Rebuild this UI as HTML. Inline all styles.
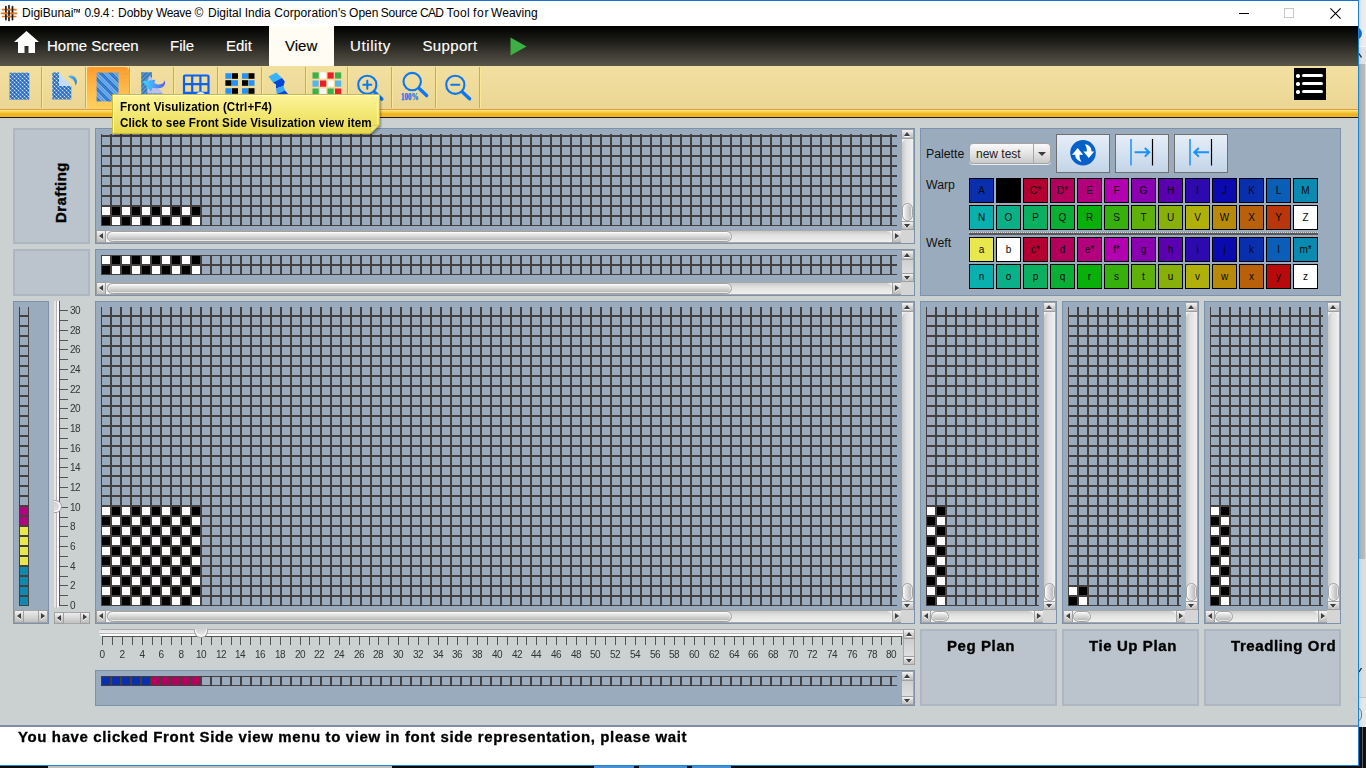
<!DOCTYPE html><html><head><meta charset="utf-8"><title>DigiBunai</title><style>
*{box-sizing:border-box;margin:0;padding:0}
html,body{width:1366px;height:768px;overflow:hidden;background:#cbd1d1;font-family:"Liberation Sans",sans-serif}
.a{position:absolute}
#root{position:absolute;left:0;top:0;width:1366px;height:768px;overflow:hidden;background:#cbd1d1}
.panel{position:absolute;background:#9aabbd;border:1px solid #7d91aa}
.lpanel{position:absolute;background:#bbc3cc;border:2px solid #adb6c1}
.grid{position:absolute;background-image:linear-gradient(to right,#454040 0,#454040 1px,transparent 1px,transparent 9px,#454040 9px,#454040 10px),linear-gradient(to bottom,#454040 0,#454040 1px,transparent 1px,transparent 9px,#454040 9px,#454040 10px);background-size:10px 10px;overflow:hidden}
.c{position:absolute;width:8px;height:8px}
.k{background:#000}.w{background:#fff}
.sbh{position:absolute;height:13px;background:#f3f3f3;border:1px solid #a8a8a8}
.trh{position:absolute;top:0;bottom:0;border-radius:6px;background:linear-gradient(to bottom,#c9c9c9,#e2e2e2 40%,#efefef)}
.sbv{position:absolute;width:13px;background:#f3f3f3;border:1px solid #a8a8a8}
.trv{position:absolute;left:0;right:0;border-radius:6px;background:linear-gradient(to right,#c9c9c9,#e2e2e2 40%,#efefef)}
.thh{position:absolute;top:0;height:11px;border-radius:6px;border:1px solid #a2a2a2;background:linear-gradient(to bottom,#fdfdfd,#e6e6e6 25%,#cfcfcf 60%,#b9b9b9 88%,#dedede);box-shadow:inset 0 0 0 1px rgba(255,255,255,0.55)}
.thv{position:absolute;left:0;width:11px;border-radius:6px;border:1px solid #a2a2a2;background:linear-gradient(to right,#fdfdfd,#e6e6e6 25%,#cfcfcf 60%,#b9b9b9 88%,#dedede);box-shadow:inset 0 0 0 1px rgba(255,255,255,0.55)}
.btn{position:absolute;background:linear-gradient(to bottom,#f4f4f4,#d4d4d4 50%,#bdbdbd);border:1px solid #a0a0a0}
.tri{position:absolute;width:0;height:0;border-style:solid}
.corner{position:absolute;background:#d5d5d5}
.tick{position:absolute;background:#555}
.tl{position:absolute;font-size:10px;color:#333;letter-spacing:-0.6px;white-space:nowrap}
.sw{position:absolute;width:25px;height:25px;border:1px solid #000;font-size:10px;line-height:23px;text-align:center;color:#0a0a0a}
.sw b{display:inline-block;font-weight:normal;transform:none}
.bl{position:absolute;font-weight:bold;color:#000;white-space:nowrap}
.mi{position:absolute;color:#fff;font-size:15px;top:36.300px;-webkit-text-stroke:0.150px currentColor;white-space:nowrap;line-height:20px}
</style></head><body><div id="root">
<div class="a" style="left:0;top:0;width:1359px;height:26px;background:#fff;border-top:1px solid #0f74d3"></div>
<svg class="a" style="left:0;top:4px" width="19" height="18" viewBox="0 4 19 18"><g stroke="#e07820" stroke-width="1.700" stroke-linecap="round"><path d="M2.600 9.700H16M1.600 13.300H16.600M2.600 16.500H15.800"/></g><g stroke="#1c1c1c" stroke-width="1.700" stroke-linecap="round"><path d="M5.900 6.600V19.600M9 5.600V20.400M12.500 6.600V19.600"/></g><g stroke="#e07820" stroke-width="1.700"><path d="M7.600 9.700H10.600M4.300 13.300H7.500M10.800 13.300H14M7.400 16.500H10.600"/></g></svg>
<div class="a" id="title" style="left:0;top:5px;width:600px;height:16px;font-size:12px;line-height:16px;color:#000;white-space:nowrap"><span class="a tw" style="left:22.1px;top:0;letter-spacing:0">DigiBunai</span> <span class="a tw" style="left:84.5px;top:0;letter-spacing:-0.45px">0.9.4</span> <span class="a tw" style="left:110.9px;top:0;letter-spacing:0">:</span> <span class="a tw" style="left:118.0px;top:0;letter-spacing:0">Dobby</span> <span class="a tw" style="left:156.1px;top:0;letter-spacing:-0.4px">Weave</span> <span class="a tw" style="left:194.5px;top:0;letter-spacing:0">©</span> <span class="a tw" style="left:208.0px;top:0;letter-spacing:0">Digital</span> <span class="a tw" style="left:244.7px;top:0;letter-spacing:0">India</span> <span class="a tw" style="left:274.2px;top:0;letter-spacing:0.09px">Corporation's</span> <span class="a tw" style="left:349.1px;top:0;letter-spacing:0">Open</span> <span class="a tw" style="left:380.8px;top:0;letter-spacing:-0.26px">Source</span> <span class="a tw" style="left:420.1px;top:0;letter-spacing:-0.7px">CAD</span> <span class="a tw" style="left:446.5px;top:0;letter-spacing:0.4px">Tool</span> <span class="a tw" style="left:472.9px;top:0;letter-spacing:0.8px">for</span> <span class="a tw" style="left:491.1px;top:0;letter-spacing:0">Weaving</span> <span class="a" style="left:73px;top:0;display:inline-block;transform:scaleX(0.68);transform-origin:0 0;font-weight:bold">™</span></div>
<div class="a" style="left:1239px;top:13px;width:10px;height:1px;background:#000"></div>
<div class="a" style="left:1284px;top:8px;width:10px;height:10px;border:1px solid #c8c8c8"></div>
<svg class="a" style="left:1329.500px;top:7.500px" width="11" height="11" viewBox="0 0 11 11"><path d="M0.400 0.400L10.600 10.600M10.600 0.400L0.400 10.600" stroke="#000" stroke-width="1.100" fill="none"/></svg>
<div class="a" style="left:0;top:26px;width:1359px;height:40px;background:linear-gradient(to bottom,#000 0,#1a1a16 35%,#3d3b32 70%,#59564a 100%)"></div>
<div class="a" style="left:269px;top:26px;width:65px;height:40px;background:#fefcf3"></div>
<svg class="a" style="left:14px;top:30.700px" width="25" height="23" viewBox="0 0 25 23"><path d="M12.5 0L25 11H21V22H14.5V15H10.5V22H4V11H0Z" fill="#fff"/></svg>
<div class="mi" style="left:47px;color:#fff;letter-spacing:0px">Home Screen</div>
<div class="mi" style="left:170px;color:#fff;letter-spacing:0px">File</div>
<div class="mi" style="left:226px;color:#fff;letter-spacing:0px">Edit</div>
<div class="mi" style="left:285px;color:#000;letter-spacing:0px">View</div>
<div class="mi" style="left:350px;color:#fff;letter-spacing:0.6px">Utility</div>
<div class="mi" style="left:422.5px;color:#fff;letter-spacing:0.35px">Support</div>
<svg class="a" style="left:510px;top:37px" width="17" height="19" viewBox="0 0 17 19"><path d="M0.5 0.5L16.5 9.5L0.5 18.5Z" fill="#3cb043"/></svg>
<div class="a" style="left:0;top:66px;width:1359px;height:43px;background:linear-gradient(to bottom,#f3e0a0,#ead594)"></div>
<div class="a" style="left:0;top:109px;width:1359px;height:1px;background:#e09a40"></div>
<div class="a" style="left:0;top:110px;width:1359px;height:7px;background:linear-gradient(to bottom,#fce98a 0,#f8cf50 25%,#f0b21c 60%,#f2b82a 100%)"></div>
<div class="a" style="left:0;top:117px;width:1359px;height:1px;background:#1a1a1a"></div>
<div class="a" style="left:86px;top:67px;width:43px;height:42px;border-radius:4px;background:linear-gradient(to bottom,#ff9b2e,#ffb648 45%,#ffd060)"></div>
<div class="a" style="left:41px;top:67px;width:1px;height:41px;background:#e0a04c"></div>
<div class="a" style="left:42px;top:67px;width:1px;height:41px;background:#f9e79a"></div>
<div class="a" style="left:85px;top:67px;width:1px;height:41px;background:#e0a04c"></div>
<div class="a" style="left:86px;top:67px;width:1px;height:41px;background:#f9e79a"></div>
<div class="a" style="left:129px;top:67px;width:1px;height:41px;background:#e0a04c"></div>
<div class="a" style="left:130px;top:67px;width:1px;height:41px;background:#f9e79a"></div>
<div class="a" style="left:173px;top:67px;width:1px;height:41px;background:#e0a04c"></div>
<div class="a" style="left:174px;top:67px;width:1px;height:41px;background:#f9e79a"></div>
<div class="a" style="left:217px;top:67px;width:1px;height:41px;background:#e0a04c"></div>
<div class="a" style="left:218px;top:67px;width:1px;height:41px;background:#f9e79a"></div>
<div class="a" style="left:261px;top:67px;width:1px;height:41px;background:#e0a04c"></div>
<div class="a" style="left:262px;top:67px;width:1px;height:41px;background:#f9e79a"></div>
<div class="a" style="left:305px;top:67px;width:1px;height:41px;background:#e0a04c"></div>
<div class="a" style="left:306px;top:67px;width:1px;height:41px;background:#f9e79a"></div>
<div class="a" style="left:347px;top:67px;width:1px;height:41px;background:#e0a04c"></div>
<div class="a" style="left:348px;top:67px;width:1px;height:41px;background:#f9e79a"></div>
<div class="a" style="left:391px;top:67px;width:1px;height:41px;background:#e0a04c"></div>
<div class="a" style="left:392px;top:67px;width:1px;height:41px;background:#f9e79a"></div>
<div class="a" style="left:435px;top:67px;width:1px;height:41px;background:#e0a04c"></div>
<div class="a" style="left:436px;top:67px;width:1px;height:41px;background:#f9e79a"></div>
<div class="a" style="left:479px;top:67px;width:1px;height:41px;background:#e0a04c"></div>
<div class="a" style="left:480px;top:67px;width:1px;height:41px;background:#f9e79a"></div>
<svg class="a" style="left:0;top:66px" width="500" height="44" viewBox="0 66 500 44"><defs>
<pattern id="dots" width="4" height="4" patternUnits="userSpaceOnUse"><rect width="4" height="4" fill="#3982d4"/><rect x="0" y="0" width="1" height="1" fill="#cfe0f5"/><rect x="2" y="2" width="1" height="1" fill="#c4d9f2"/><rect x="2" y="0" width="1" height="1" fill="#38598c"/><rect x="0" y="2" width="1" height="1" fill="#3b66a6"/><rect x="1" y="1" width="1" height="1" fill="#5a9ae0"/><rect x="3" y="3" width="1" height="1" fill="#5a9ae0"/></pattern>
<pattern id="diag" width="7" height="7" patternUnits="userSpaceOnUse" patternTransform="rotate(-45 0 0)"><rect width="7" height="7" fill="#1473c8"/><rect x="0" y="0" width="0.9" height="7" fill="#a6b0ec"/><rect x="0.9" y="0" width="2.2" height="7" fill="#56a6e8"/><rect x="3.1" y="0" width="0.9" height="7" fill="#a6b0ec"/><rect x="5.3" y="0" width="0.6" height="7" fill="#6a9be0"/></pattern>
<pattern id="hatch" width="3" height="3" patternUnits="userSpaceOnUse" patternTransform="rotate(45 0 0)"><rect width="3" height="3" fill="#2a7fb8"/><rect width="1" height="3" fill="#7f96d0"/></pattern>
<linearGradient id="arr" x1="0" y1="0" x2="1" y2="0"><stop offset="0" stop-color="#3fd8f8"/><stop offset="0.5" stop-color="#4aa0f8"/><stop offset="1" stop-color="#5a5af0"/></linearGradient>
<linearGradient id="arr2" x1="0" y1="0" x2="1" y2="1"><stop offset="0" stop-color="#5bc0f0"/><stop offset="1" stop-color="#2a6fd0"/></linearGradient>
</defs><rect x="9.500" y="72.700" width="19.800" height="27" fill="url(#dots)"/><path d="M52.3 72.6H59.2V86H71.3V99.4H52.3Z" fill="url(#dots)"/><path d="M59.2 73L71.3 86H59.2Z" fill="#c4ddf6"/><path d="M68 76.3C71.5 74.2 76.2 76.5 76.9 81.2C77 83 76.2 84.6 75.4 85.6C75.4 82 73.6 79.2 70.6 78.2C69.8 77.6 68.8 76.8 68 76.3Z" fill="url(#arr2)"/><rect x="96.6" y="72.6" width="21.9" height="28.8" fill="url(#diag)"/><path d="M141.200 72.200H152V80L163 94V96H141.200Z" fill="url(#hatch)"/><path d="M150 75.500L163 93.500H147.400V80Z" fill="#bfc1e4"/><path d="M142.500 81.200L155.400 79.800L154.200 83C158 85.600 163.400 84.800 164.800 80.200C166 84.400 163.600 87.400 160.200 88C157 88.500 154.500 87.600 152.400 88L151 91.800Z" fill="url(#arr)"/><g fill="none" stroke="#0a62f2" stroke-width="2.200"><rect x="184" y="75.5" width="24.5" height="26" rx="1"/><path d="M192.2 75.5V101M200.4 75.5V101M184 84.2H208.5M184 92.8H208.5"/></g><circle cx="200.600" cy="96.600" r="5" fill="#e4ecf2" stroke="#3a7be0" stroke-width="0.800"/><rect x="225.4" y="73.2" width="6.1" height="5.6" fill="#2391f5"/><rect x="231.9" y="73.2" width="6.1" height="5.6" fill="#000"/><rect x="242" y="73.2" width="6.1" height="5.6" fill="#2391f5"/><rect x="248.4" y="73.2" width="6.1" height="5.6" fill="#000"/><rect x="225.4" y="80.2" width="6.1" height="5.6" fill="#000"/><rect x="231.9" y="80.2" width="6.1" height="5.6" fill="#2391f5"/><rect x="242" y="80.2" width="6.1" height="5.6" fill="#000"/><rect x="248.4" y="80.2" width="6.1" height="5.6" fill="#2391f5"/><rect x="225.4" y="88.2" width="6.1" height="5.6" fill="#2391f5"/><rect x="231.9" y="88.2" width="6.1" height="5.6" fill="#000"/><rect x="242" y="88.2" width="6.1" height="5.6" fill="#2391f5"/><rect x="248.4" y="88.2" width="6.1" height="5.6" fill="#000"/><path d="M268.6 76.5L276.4 72.4L282 78L273 82.5Z" fill="#39b3fb"/><path d="M273 82.5L282 78L284.8 81.5L283.5 86L276 88.5L276 84.5Z" fill="#0347d8"/><path d="M276 88.5L283.5 86L285 90.5L276.8 94Z" fill="#39a9f5"/><path d="M276.8 94L285 90.5L289 95H276.8Z" fill="#0347d8"/><rect x="312.5" y="72.4" width="6.2" height="6.2" fill="#3cb04a"/><rect x="320" y="72.4" width="6.2" height="6.2" fill="#ffffff"/><rect x="327.5" y="72.4" width="6.2" height="6.2" fill="#ee1c25"/><rect x="335" y="72.4" width="6.2" height="6.2" fill="#3cb04a"/><rect x="312.5" y="80.5" width="6.2" height="6.2" fill="#55b6ea"/><rect x="320" y="80.5" width="6.2" height="6.2" fill="#ee1c25"/><rect x="327.5" y="80.5" width="6.2" height="6.2" fill="#ffffff"/><rect x="335" y="80.5" width="6.2" height="6.2" fill="#55b6ea"/><rect x="312.5" y="88.5" width="6.2" height="6.2" fill="#3cb04a"/><rect x="320" y="88.5" width="6.2" height="6.2" fill="#f4f4f4"/><rect x="327.5" y="88.5" width="6.2" height="6.2" fill="#3cb04a"/><rect x="335" y="88.5" width="6.2" height="6.2" fill="#ee1c25"/><g fill="none" stroke="#0a78f5" stroke-linecap="round"><circle cx="367.300" cy="84.800" r="9.100" stroke-width="2.100"/><path d="M363.300 84.800H371.300M367.300 80.800V88.800" stroke-width="2"/><path d="M374.600 92.200L381.800 99" stroke-width="3.600"/></g><g fill="none" stroke="#0a78f5" stroke-linecap="round"><circle cx="412.200" cy="81.600" r="8.700" stroke-width="2.100"/><path d="M419.200 88.600L426.600 95.600" stroke-width="3.400"/></g><text x="401" y="100.4" font-family="Liberation Serif,serif" font-weight="bold" font-size="10" fill="#0a6cf0" stroke="#0a6cf0" stroke-width="0.250" textLength="17.600" lengthAdjust="spacingAndGlyphs">100%</text><g fill="none" stroke="#0a78f5" stroke-linecap="round"><circle cx="455.300" cy="84.800" r="9.100" stroke-width="2.100"/><path d="M451.300 84.800H459.300" stroke-width="2.100"/><path d="M462.600 92.200L469.600 98.800" stroke-width="3.400"/></g></svg>
<div class="a" style="left:1294px;top:68px;width:32px;height:32px;background:#000"></div>
<div class="a" style="left:1302.200px;top:74.05px;width:20.800px;height:3.100px;border-radius:1.550px;background:#fff"></div>
<div class="a" style="left:1296.200px;top:74.05px;width:3.600px;height:3.500px;border-radius:1.750px;background:#fff"></div>
<div class="a" style="left:1302.200px;top:82.15px;width:20.800px;height:3.100px;border-radius:1.550px;background:#fff"></div>
<div class="a" style="left:1296.200px;top:82.15px;width:3.600px;height:3.500px;border-radius:1.750px;background:#fff"></div>
<div class="a" style="left:1302.200px;top:90.25px;width:20.800px;height:3.100px;border-radius:1.550px;background:#fff"></div>
<div class="a" style="left:1296.200px;top:90.25px;width:3.600px;height:3.500px;border-radius:1.750px;background:#fff"></div>
<div class="lpanel" style="left:13px;top:128px;width:77px;height:116px"></div>
<div class="lpanel" style="left:13px;top:249px;width:77px;height:47px"></div>
<div class="bl" style="left:53px;top:222.800px;font-size:14px;transform:rotate(-90deg) scaleX(1.07);transform-origin:0 0;letter-spacing:0.400px;line-height:16px;-webkit-text-stroke:0.350px #000">Drafting</div>
<div class="panel" style="left:95px;top:128px;width:820px;height:116px"></div>
<div class="grid" style="left:101px;top:134px;width:796px;height:92px;background-position:0px 2px"><i class="c w" style="left:1px;top:73px"></i><i class="c k" style="left:1px;top:83px"></i><i class="c k" style="left:11px;top:73px"></i><i class="c w" style="left:11px;top:83px"></i><i class="c w" style="left:21px;top:73px"></i><i class="c k" style="left:21px;top:83px"></i><i class="c k" style="left:31px;top:73px"></i><i class="c w" style="left:31px;top:83px"></i><i class="c w" style="left:41px;top:73px"></i><i class="c k" style="left:41px;top:83px"></i><i class="c k" style="left:51px;top:73px"></i><i class="c w" style="left:51px;top:83px"></i><i class="c w" style="left:61px;top:73px"></i><i class="c k" style="left:61px;top:83px"></i><i class="c k" style="left:71px;top:73px"></i><i class="c w" style="left:71px;top:83px"></i><i class="c w" style="left:81px;top:73px"></i><i class="c k" style="left:81px;top:83px"></i><i class="c k" style="left:91px;top:73px"></i><i class="c w" style="left:91px;top:83px"></i></div>
<div class="sbv" style="left:901px;top:129px;height:101px;width:13px"><div class="trv" style="top:9px;bottom:8px"></div><div class="thv" style="top:73px;height:18px;width:11px"></div></div><div class="btn" style="left:901px;top:129px;width:13px;height:10px"></div><div class="tri" style="left:904px;top:133px;border-width:0 3px 4px 3px;border-color:transparent transparent #fff transparent"></div><div class="tri" style="left:904px;top:132px;border-width:0 3px 4px 3px;border-color:transparent transparent #3e3e3e transparent"></div><div class="btn" style="left:901px;top:221px;width:13px;height:9px"></div><div class="tri" style="left:904px;top:225px;border-width:4px 3px 0 3px;border-color:#fff transparent transparent transparent"></div><div class="tri" style="left:904px;top:224px;border-width:4px 3px 0 3px;border-color:#3e3e3e transparent transparent transparent"></div>
<div class="sbh" style="left:96px;top:230px;width:805px;height:13px"><div class="trh" style="left:9px;right:8px"></div><div class="thh" style="left:10px;width:625px;height:11px"></div></div><div class="btn" style="left:96px;top:230px;width:10px;height:13px"></div><div class="tri"  style="left:99px;top:234px;border-width:3px 4px 3px 0;border-color:transparent #fff transparent transparent"></div><div class="tri" style="left:99px;top:233px;border-width:3px 4px 3px 0;border-color:transparent #3e3e3e transparent transparent"></div><div class="btn" style="left:892px;top:230px;width:9px;height:13px;border-right:none"></div><div class="tri"  style="left:895px;top:234px;border-width:3px 0 3px 4px;border-color:transparent transparent transparent #fff"></div><div class="tri" style="left:895px;top:233px;border-width:3px 0 3px 4px;border-color:transparent transparent transparent #3e3e3e"></div>
<div class="corner" style="left:901px;top:230px;width:13px;height:13px"></div>
<div class="panel" style="left:95px;top:249px;width:820px;height:47px"></div>
<div class="grid" style="left:101px;top:255px;width:796px;height:20px;background-position:0px 0px"><i class="c w" style="left:1px;top:1px"></i><i class="c k" style="left:1px;top:11px"></i><i class="c k" style="left:11px;top:1px"></i><i class="c w" style="left:11px;top:11px"></i><i class="c w" style="left:21px;top:1px"></i><i class="c k" style="left:21px;top:11px"></i><i class="c k" style="left:31px;top:1px"></i><i class="c w" style="left:31px;top:11px"></i><i class="c w" style="left:41px;top:1px"></i><i class="c k" style="left:41px;top:11px"></i><i class="c k" style="left:51px;top:1px"></i><i class="c w" style="left:51px;top:11px"></i><i class="c w" style="left:61px;top:1px"></i><i class="c k" style="left:61px;top:11px"></i><i class="c k" style="left:71px;top:1px"></i><i class="c w" style="left:71px;top:11px"></i><i class="c w" style="left:81px;top:1px"></i><i class="c k" style="left:81px;top:11px"></i><i class="c k" style="left:91px;top:1px"></i><i class="c w" style="left:91px;top:11px"></i></div>
<div class="sbv" style="left:901px;top:250px;height:32px;width:13px;background:linear-gradient(to bottom,#c4c4c4,#e8e8e8)"></div><div class="btn" style="left:901px;top:250px;width:13px;height:10px"></div><div class="tri" style="left:904px;top:254px;border-width:0 3px 4px 3px;border-color:transparent transparent #fff transparent"></div><div class="tri" style="left:904px;top:253px;border-width:0 3px 4px 3px;border-color:transparent transparent #3e3e3e transparent"></div><div class="btn" style="left:901px;top:273px;width:13px;height:9px"></div><div class="tri" style="left:904px;top:277px;border-width:4px 3px 0 3px;border-color:#fff transparent transparent transparent"></div><div class="tri" style="left:904px;top:276px;border-width:4px 3px 0 3px;border-color:#3e3e3e transparent transparent transparent"></div>
<div class="sbh" style="left:96px;top:282px;width:805px;height:13px"><div class="trh" style="left:9px;right:8px"></div><div class="thh" style="left:10px;width:625px;height:11px"></div></div><div class="btn" style="left:96px;top:282px;width:10px;height:13px"></div><div class="tri"  style="left:99px;top:286px;border-width:3px 4px 3px 0;border-color:transparent #fff transparent transparent"></div><div class="tri" style="left:99px;top:285px;border-width:3px 4px 3px 0;border-color:transparent #3e3e3e transparent transparent"></div><div class="btn" style="left:892px;top:282px;width:9px;height:13px;border-right:none"></div><div class="tri"  style="left:895px;top:286px;border-width:3px 0 3px 4px;border-color:transparent transparent transparent #fff"></div><div class="tri" style="left:895px;top:285px;border-width:3px 0 3px 4px;border-color:transparent transparent transparent #3e3e3e"></div>
<div class="corner" style="left:901px;top:282px;width:13px;height:13px"></div>
<div class="panel" style="left:95px;top:301px;width:820px;height:323px"></div>
<div class="grid" style="left:101px;top:307px;width:796px;height:299px;background-position:0px 9px"><i class="c k" style="left:1px;top:290px"></i><i class="c w" style="left:11px;top:290px"></i><i class="c k" style="left:21px;top:290px"></i><i class="c w" style="left:31px;top:290px"></i><i class="c k" style="left:41px;top:290px"></i><i class="c w" style="left:51px;top:290px"></i><i class="c k" style="left:61px;top:290px"></i><i class="c w" style="left:71px;top:290px"></i><i class="c k" style="left:81px;top:290px"></i><i class="c w" style="left:91px;top:290px"></i><i class="c w" style="left:1px;top:280px"></i><i class="c k" style="left:11px;top:280px"></i><i class="c w" style="left:21px;top:280px"></i><i class="c k" style="left:31px;top:280px"></i><i class="c w" style="left:41px;top:280px"></i><i class="c k" style="left:51px;top:280px"></i><i class="c w" style="left:61px;top:280px"></i><i class="c k" style="left:71px;top:280px"></i><i class="c w" style="left:81px;top:280px"></i><i class="c k" style="left:91px;top:280px"></i><i class="c k" style="left:1px;top:270px"></i><i class="c w" style="left:11px;top:270px"></i><i class="c k" style="left:21px;top:270px"></i><i class="c w" style="left:31px;top:270px"></i><i class="c k" style="left:41px;top:270px"></i><i class="c w" style="left:51px;top:270px"></i><i class="c k" style="left:61px;top:270px"></i><i class="c w" style="left:71px;top:270px"></i><i class="c k" style="left:81px;top:270px"></i><i class="c w" style="left:91px;top:270px"></i><i class="c w" style="left:1px;top:260px"></i><i class="c k" style="left:11px;top:260px"></i><i class="c w" style="left:21px;top:260px"></i><i class="c k" style="left:31px;top:260px"></i><i class="c w" style="left:41px;top:260px"></i><i class="c k" style="left:51px;top:260px"></i><i class="c w" style="left:61px;top:260px"></i><i class="c k" style="left:71px;top:260px"></i><i class="c w" style="left:81px;top:260px"></i><i class="c k" style="left:91px;top:260px"></i><i class="c k" style="left:1px;top:250px"></i><i class="c w" style="left:11px;top:250px"></i><i class="c k" style="left:21px;top:250px"></i><i class="c w" style="left:31px;top:250px"></i><i class="c k" style="left:41px;top:250px"></i><i class="c w" style="left:51px;top:250px"></i><i class="c k" style="left:61px;top:250px"></i><i class="c w" style="left:71px;top:250px"></i><i class="c k" style="left:81px;top:250px"></i><i class="c w" style="left:91px;top:250px"></i><i class="c w" style="left:1px;top:240px"></i><i class="c k" style="left:11px;top:240px"></i><i class="c w" style="left:21px;top:240px"></i><i class="c k" style="left:31px;top:240px"></i><i class="c w" style="left:41px;top:240px"></i><i class="c k" style="left:51px;top:240px"></i><i class="c w" style="left:61px;top:240px"></i><i class="c k" style="left:71px;top:240px"></i><i class="c w" style="left:81px;top:240px"></i><i class="c k" style="left:91px;top:240px"></i><i class="c k" style="left:1px;top:230px"></i><i class="c w" style="left:11px;top:230px"></i><i class="c k" style="left:21px;top:230px"></i><i class="c w" style="left:31px;top:230px"></i><i class="c k" style="left:41px;top:230px"></i><i class="c w" style="left:51px;top:230px"></i><i class="c k" style="left:61px;top:230px"></i><i class="c w" style="left:71px;top:230px"></i><i class="c k" style="left:81px;top:230px"></i><i class="c w" style="left:91px;top:230px"></i><i class="c w" style="left:1px;top:220px"></i><i class="c k" style="left:11px;top:220px"></i><i class="c w" style="left:21px;top:220px"></i><i class="c k" style="left:31px;top:220px"></i><i class="c w" style="left:41px;top:220px"></i><i class="c k" style="left:51px;top:220px"></i><i class="c w" style="left:61px;top:220px"></i><i class="c k" style="left:71px;top:220px"></i><i class="c w" style="left:81px;top:220px"></i><i class="c k" style="left:91px;top:220px"></i><i class="c k" style="left:1px;top:210px"></i><i class="c w" style="left:11px;top:210px"></i><i class="c k" style="left:21px;top:210px"></i><i class="c w" style="left:31px;top:210px"></i><i class="c k" style="left:41px;top:210px"></i><i class="c w" style="left:51px;top:210px"></i><i class="c k" style="left:61px;top:210px"></i><i class="c w" style="left:71px;top:210px"></i><i class="c k" style="left:81px;top:210px"></i><i class="c w" style="left:91px;top:210px"></i><i class="c w" style="left:1px;top:200px"></i><i class="c k" style="left:11px;top:200px"></i><i class="c w" style="left:21px;top:200px"></i><i class="c k" style="left:31px;top:200px"></i><i class="c w" style="left:41px;top:200px"></i><i class="c k" style="left:51px;top:200px"></i><i class="c w" style="left:61px;top:200px"></i><i class="c k" style="left:71px;top:200px"></i><i class="c w" style="left:81px;top:200px"></i><i class="c k" style="left:91px;top:200px"></i></div>
<div class="sbv" style="left:901px;top:302px;height:308px;width:13px"><div class="trv" style="top:9px;bottom:8px"></div><div class="thv" style="top:280px;height:18px;width:11px"></div></div><div class="btn" style="left:901px;top:302px;width:13px;height:10px"></div><div class="tri" style="left:904px;top:306px;border-width:0 3px 4px 3px;border-color:transparent transparent #fff transparent"></div><div class="tri" style="left:904px;top:305px;border-width:0 3px 4px 3px;border-color:transparent transparent #3e3e3e transparent"></div><div class="btn" style="left:901px;top:601px;width:13px;height:9px"></div><div class="tri" style="left:904px;top:605px;border-width:4px 3px 0 3px;border-color:#fff transparent transparent transparent"></div><div class="tri" style="left:904px;top:604px;border-width:4px 3px 0 3px;border-color:#3e3e3e transparent transparent transparent"></div>
<div class="sbh" style="left:96px;top:610px;width:805px;height:13px"><div class="trh" style="left:9px;right:8px"></div><div class="thh" style="left:10px;width:625px;height:11px"></div></div><div class="btn" style="left:96px;top:610px;width:10px;height:13px"></div><div class="tri"  style="left:99px;top:614px;border-width:3px 4px 3px 0;border-color:transparent #fff transparent transparent"></div><div class="tri" style="left:99px;top:613px;border-width:3px 4px 3px 0;border-color:transparent #3e3e3e transparent transparent"></div><div class="btn" style="left:892px;top:610px;width:9px;height:13px;border-right:none"></div><div class="tri"  style="left:895px;top:614px;border-width:3px 0 3px 4px;border-color:transparent transparent transparent #fff"></div><div class="tri" style="left:895px;top:613px;border-width:3px 0 3px 4px;border-color:transparent transparent transparent #3e3e3e"></div>
<div class="corner" style="left:901px;top:610px;width:13px;height:13px"></div>
<div class="panel" style="left:13px;top:301px;width:36px;height:323px"></div>
<div class="a" style="left:19px;top:307px;width:10px;height:299px;overflow:hidden;background-image:linear-gradient(to right,#454040 0,#454040 1px,transparent 1px,transparent 9px,#454040 9px,#454040 10px),linear-gradient(to bottom,#454040 0,#454040 1px,transparent 1px,transparent 9px,#454040 9px,#454040 10px);background-size:10px 10px;background-position:0 9px"><i class="c" style="left:1px;top:290px;background:#1089b0"></i><i class="c" style="left:1px;top:280px;background:#1089b0"></i><i class="c" style="left:1px;top:270px;background:#1089b0"></i><i class="c" style="left:1px;top:260px;background:#1089b0"></i><i class="c" style="left:1px;top:250px;background:#e9e74e"></i><i class="c" style="left:1px;top:240px;background:#e9e74e"></i><i class="c" style="left:1px;top:230px;background:#e9e74e"></i><i class="c" style="left:1px;top:220px;background:#e9e74e"></i><i class="c" style="left:1px;top:210px;background:#b3007c"></i><i class="c" style="left:1px;top:200px;background:#b3007c"></i></div>
<div class="sbh" style="left:14px;top:610px;width:34px;height:13px;background:linear-gradient(to bottom,#ebebeb,#c2c2c2)"></div><div class="btn" style="left:14px;top:610px;width:10px;height:13px"></div><div class="tri"  style="left:17px;top:614px;border-width:3px 4px 3px 0;border-color:transparent #fff transparent transparent"></div><div class="tri" style="left:17px;top:613px;border-width:3px 4px 3px 0;border-color:transparent #3e3e3e transparent transparent"></div><div class="btn" style="left:38px;top:610px;width:10px;height:13px"></div><div class="tri"  style="left:41px;top:614px;border-width:3px 0 3px 4px;border-color:transparent transparent transparent #fff"></div><div class="tri" style="left:41px;top:613px;border-width:3px 0 3px 4px;border-color:transparent transparent transparent #3e3e3e"></div>
<div class="a" style="left:0;top:0;width:0;height:0;will-change:transform">
<div class="a" style="left:54px;top:301px;width:5px;height:307px;border-radius:0 0 3px 3px;background:linear-gradient(to right,#e6e6e6 0,#e6e6e6 2px,#b4b4b4 2px,#b4b4b4 3px,#fff 3px)"></div>
<div class="a" style="left:53.700px;top:499.500px;width:8px;height:13.300px;border-radius:0 7px 7px 0;background:linear-gradient(to bottom,#cecece,#e2e2e2);border:1px solid #a4a4a4;border-left:none;box-shadow:inset -1px 0 0 1px rgba(255,255,255,0.8);z-index:3"></div>
<div class="tick" style="left:59px;top:301px;width:1px;height:305px"></div>
<div class="tick" style="left:60px;top:605px;width:8px;height:1px"></div>
<div class="tl" style="left:70px;top:599px;line-height:13px">0</div>
<div class="tick" style="left:60px;top:595px;width:8px;height:1px"></div>
<div class="tick" style="left:60px;top:585px;width:8px;height:1px"></div>
<div class="tl" style="left:70px;top:579px;line-height:13px">2</div>
<div class="tick" style="left:60px;top:576px;width:8px;height:1px"></div>
<div class="tick" style="left:60px;top:566px;width:8px;height:1px"></div>
<div class="tl" style="left:70px;top:560px;line-height:13px">4</div>
<div class="tick" style="left:60px;top:556px;width:8px;height:1px"></div>
<div class="tick" style="left:60px;top:546px;width:8px;height:1px"></div>
<div class="tl" style="left:70px;top:540px;line-height:13px">6</div>
<div class="tick" style="left:60px;top:536px;width:8px;height:1px"></div>
<div class="tick" style="left:60px;top:526px;width:8px;height:1px"></div>
<div class="tl" style="left:70px;top:520px;line-height:13px">8</div>
<div class="tick" style="left:60px;top:517px;width:8px;height:1px"></div>
<div class="tick" style="left:60px;top:507px;width:8px;height:1px"></div>
<div class="tl" style="left:70px;top:501px;line-height:13px">10</div>
<div class="tick" style="left:60px;top:497px;width:8px;height:1px"></div>
<div class="tick" style="left:60px;top:487px;width:8px;height:1px"></div>
<div class="tl" style="left:70px;top:481px;line-height:13px">12</div>
<div class="tick" style="left:60px;top:477px;width:8px;height:1px"></div>
<div class="tick" style="left:60px;top:467px;width:8px;height:1px"></div>
<div class="tl" style="left:70px;top:461px;line-height:13px">14</div>
<div class="tick" style="left:60px;top:458px;width:8px;height:1px"></div>
<div class="tick" style="left:60px;top:448px;width:8px;height:1px"></div>
<div class="tl" style="left:70px;top:442px;line-height:13px">16</div>
<div class="tick" style="left:60px;top:438px;width:8px;height:1px"></div>
<div class="tick" style="left:60px;top:428px;width:8px;height:1px"></div>
<div class="tl" style="left:70px;top:422px;line-height:13px">18</div>
<div class="tick" style="left:60px;top:418px;width:8px;height:1px"></div>
<div class="tick" style="left:60px;top:408px;width:8px;height:1px"></div>
<div class="tl" style="left:70px;top:402px;line-height:13px">20</div>
<div class="tick" style="left:60px;top:399px;width:8px;height:1px"></div>
<div class="tick" style="left:60px;top:389px;width:8px;height:1px"></div>
<div class="tl" style="left:70px;top:383px;line-height:13px">22</div>
<div class="tick" style="left:60px;top:379px;width:8px;height:1px"></div>
<div class="tick" style="left:60px;top:369px;width:8px;height:1px"></div>
<div class="tl" style="left:70px;top:363px;line-height:13px">24</div>
<div class="tick" style="left:60px;top:359px;width:8px;height:1px"></div>
<div class="tick" style="left:60px;top:349px;width:8px;height:1px"></div>
<div class="tl" style="left:70px;top:343px;line-height:13px">26</div>
<div class="tick" style="left:60px;top:340px;width:8px;height:1px"></div>
<div class="tick" style="left:60px;top:330px;width:8px;height:1px"></div>
<div class="tl" style="left:70px;top:324px;line-height:13px">28</div>
<div class="tick" style="left:60px;top:320px;width:8px;height:1px"></div>
<div class="tick" style="left:60px;top:310px;width:8px;height:1px"></div>
<div class="tl" style="left:70px;top:304px;line-height:13px">30</div>
<div class="sbh" style="left:54px;top:612px;width:36px;height:12px;background:linear-gradient(to bottom,#ebebeb,#c2c2c2)"></div><div class="btn" style="left:54px;top:612px;width:10px;height:12px"></div><div class="tri"  style="left:57px;top:616px;border-width:3px 4px 3px 0;border-color:transparent #fff transparent transparent"></div><div class="tri" style="left:57px;top:615px;border-width:3px 4px 3px 0;border-color:transparent #3e3e3e transparent transparent"></div><div class="btn" style="left:80px;top:612px;width:10px;height:12px"></div><div class="tri"  style="left:83px;top:615px;border-width:3px 0 3px 4px;border-color:transparent transparent transparent #fff"></div><div class="tri" style="left:83px;top:614px;border-width:3px 0 3px 4px;border-color:transparent transparent transparent #3e3e3e"></div>
<div class="a" style="left:99px;top:629px;width:804px;height:7px;border-radius:4px 0 0 4px;background:linear-gradient(to bottom,#a8a8a8 0,#a8a8a8 1px,#e2e2e2 1px,#efefef 4px,#b8b8b8 4px,#b8b8b8 5px,#fff 5px)"></div>
<div class="a" style="left:194.300px;top:629.300px;width:13.400px;height:8.700px;border-radius:0 0 7px 7px;background:linear-gradient(to bottom,#d2d2d2,#eeeeee);border:1px solid #a4a4a4;border-top:none;box-shadow:inset 0 -1px 0 1px rgba(255,255,255,0.8);z-index:3"></div>
<div class="tick" style="left:102px;top:636px;width:800px;height:1px"></div>
<div class="tick" style="left:102px;top:636px;width:1px;height:9px"></div>
<div class="tl" style="left:92px;top:648px;width:20px;text-align:center;line-height:13px">0</div>
<div class="tick" style="left:112px;top:636px;width:1px;height:9px"></div>
<div class="tick" style="left:122px;top:636px;width:1px;height:9px"></div>
<div class="tl" style="left:112px;top:648px;width:20px;text-align:center;line-height:13px">2</div>
<div class="tick" style="left:132px;top:636px;width:1px;height:9px"></div>
<div class="tick" style="left:142px;top:636px;width:1px;height:9px"></div>
<div class="tl" style="left:132px;top:648px;width:20px;text-align:center;line-height:13px">4</div>
<div class="tick" style="left:152px;top:636px;width:1px;height:9px"></div>
<div class="tick" style="left:161px;top:636px;width:1px;height:9px"></div>
<div class="tl" style="left:151px;top:648px;width:20px;text-align:center;line-height:13px">6</div>
<div class="tick" style="left:171px;top:636px;width:1px;height:9px"></div>
<div class="tick" style="left:181px;top:636px;width:1px;height:9px"></div>
<div class="tl" style="left:171px;top:648px;width:20px;text-align:center;line-height:13px">8</div>
<div class="tick" style="left:191px;top:636px;width:1px;height:9px"></div>
<div class="tick" style="left:201px;top:636px;width:1px;height:9px"></div>
<div class="tl" style="left:191px;top:648px;width:20px;text-align:center;line-height:13px">10</div>
<div class="tick" style="left:211px;top:636px;width:1px;height:9px"></div>
<div class="tick" style="left:221px;top:636px;width:1px;height:9px"></div>
<div class="tl" style="left:211px;top:648px;width:20px;text-align:center;line-height:13px">12</div>
<div class="tick" style="left:231px;top:636px;width:1px;height:9px"></div>
<div class="tick" style="left:240px;top:636px;width:1px;height:9px"></div>
<div class="tl" style="left:230px;top:648px;width:20px;text-align:center;line-height:13px">14</div>
<div class="tick" style="left:250px;top:636px;width:1px;height:9px"></div>
<div class="tick" style="left:260px;top:636px;width:1px;height:9px"></div>
<div class="tl" style="left:250px;top:648px;width:20px;text-align:center;line-height:13px">16</div>
<div class="tick" style="left:270px;top:636px;width:1px;height:9px"></div>
<div class="tick" style="left:280px;top:636px;width:1px;height:9px"></div>
<div class="tl" style="left:270px;top:648px;width:20px;text-align:center;line-height:13px">18</div>
<div class="tick" style="left:290px;top:636px;width:1px;height:9px"></div>
<div class="tick" style="left:300px;top:636px;width:1px;height:9px"></div>
<div class="tl" style="left:290px;top:648px;width:20px;text-align:center;line-height:13px">20</div>
<div class="tick" style="left:309px;top:636px;width:1px;height:9px"></div>
<div class="tick" style="left:319px;top:636px;width:1px;height:9px"></div>
<div class="tl" style="left:309px;top:648px;width:20px;text-align:center;line-height:13px">22</div>
<div class="tick" style="left:329px;top:636px;width:1px;height:9px"></div>
<div class="tick" style="left:339px;top:636px;width:1px;height:9px"></div>
<div class="tl" style="left:329px;top:648px;width:20px;text-align:center;line-height:13px">24</div>
<div class="tick" style="left:349px;top:636px;width:1px;height:9px"></div>
<div class="tick" style="left:359px;top:636px;width:1px;height:9px"></div>
<div class="tl" style="left:349px;top:648px;width:20px;text-align:center;line-height:13px">26</div>
<div class="tick" style="left:369px;top:636px;width:1px;height:9px"></div>
<div class="tick" style="left:378px;top:636px;width:1px;height:9px"></div>
<div class="tl" style="left:368px;top:648px;width:20px;text-align:center;line-height:13px">28</div>
<div class="tick" style="left:388px;top:636px;width:1px;height:9px"></div>
<div class="tick" style="left:398px;top:636px;width:1px;height:9px"></div>
<div class="tl" style="left:388px;top:648px;width:20px;text-align:center;line-height:13px">30</div>
<div class="tick" style="left:408px;top:636px;width:1px;height:9px"></div>
<div class="tick" style="left:418px;top:636px;width:1px;height:9px"></div>
<div class="tl" style="left:408px;top:648px;width:20px;text-align:center;line-height:13px">32</div>
<div class="tick" style="left:428px;top:636px;width:1px;height:9px"></div>
<div class="tick" style="left:438px;top:636px;width:1px;height:9px"></div>
<div class="tl" style="left:428px;top:648px;width:20px;text-align:center;line-height:13px">34</div>
<div class="tick" style="left:447px;top:636px;width:1px;height:9px"></div>
<div class="tick" style="left:457px;top:636px;width:1px;height:9px"></div>
<div class="tl" style="left:447px;top:648px;width:20px;text-align:center;line-height:13px">36</div>
<div class="tick" style="left:467px;top:636px;width:1px;height:9px"></div>
<div class="tick" style="left:477px;top:636px;width:1px;height:9px"></div>
<div class="tl" style="left:467px;top:648px;width:20px;text-align:center;line-height:13px">38</div>
<div class="tick" style="left:487px;top:636px;width:1px;height:9px"></div>
<div class="tick" style="left:497px;top:636px;width:1px;height:9px"></div>
<div class="tl" style="left:487px;top:648px;width:20px;text-align:center;line-height:13px">40</div>
<div class="tick" style="left:507px;top:636px;width:1px;height:9px"></div>
<div class="tick" style="left:517px;top:636px;width:1px;height:9px"></div>
<div class="tl" style="left:507px;top:648px;width:20px;text-align:center;line-height:13px">42</div>
<div class="tick" style="left:526px;top:636px;width:1px;height:9px"></div>
<div class="tick" style="left:536px;top:636px;width:1px;height:9px"></div>
<div class="tl" style="left:526px;top:648px;width:20px;text-align:center;line-height:13px">44</div>
<div class="tick" style="left:546px;top:636px;width:1px;height:9px"></div>
<div class="tick" style="left:556px;top:636px;width:1px;height:9px"></div>
<div class="tl" style="left:546px;top:648px;width:20px;text-align:center;line-height:13px">46</div>
<div class="tick" style="left:566px;top:636px;width:1px;height:9px"></div>
<div class="tick" style="left:576px;top:636px;width:1px;height:9px"></div>
<div class="tl" style="left:566px;top:648px;width:20px;text-align:center;line-height:13px">48</div>
<div class="tick" style="left:586px;top:636px;width:1px;height:9px"></div>
<div class="tick" style="left:595px;top:636px;width:1px;height:9px"></div>
<div class="tl" style="left:585px;top:648px;width:20px;text-align:center;line-height:13px">50</div>
<div class="tick" style="left:605px;top:636px;width:1px;height:9px"></div>
<div class="tick" style="left:615px;top:636px;width:1px;height:9px"></div>
<div class="tl" style="left:605px;top:648px;width:20px;text-align:center;line-height:13px">52</div>
<div class="tick" style="left:625px;top:636px;width:1px;height:9px"></div>
<div class="tick" style="left:635px;top:636px;width:1px;height:9px"></div>
<div class="tl" style="left:625px;top:648px;width:20px;text-align:center;line-height:13px">54</div>
<div class="tick" style="left:645px;top:636px;width:1px;height:9px"></div>
<div class="tick" style="left:655px;top:636px;width:1px;height:9px"></div>
<div class="tl" style="left:645px;top:648px;width:20px;text-align:center;line-height:13px">56</div>
<div class="tick" style="left:664px;top:636px;width:1px;height:9px"></div>
<div class="tick" style="left:674px;top:636px;width:1px;height:9px"></div>
<div class="tl" style="left:664px;top:648px;width:20px;text-align:center;line-height:13px">58</div>
<div class="tick" style="left:684px;top:636px;width:1px;height:9px"></div>
<div class="tick" style="left:694px;top:636px;width:1px;height:9px"></div>
<div class="tl" style="left:684px;top:648px;width:20px;text-align:center;line-height:13px">60</div>
<div class="tick" style="left:704px;top:636px;width:1px;height:9px"></div>
<div class="tick" style="left:714px;top:636px;width:1px;height:9px"></div>
<div class="tl" style="left:704px;top:648px;width:20px;text-align:center;line-height:13px">62</div>
<div class="tick" style="left:724px;top:636px;width:1px;height:9px"></div>
<div class="tick" style="left:734px;top:636px;width:1px;height:9px"></div>
<div class="tl" style="left:724px;top:648px;width:20px;text-align:center;line-height:13px">64</div>
<div class="tick" style="left:743px;top:636px;width:1px;height:9px"></div>
<div class="tick" style="left:753px;top:636px;width:1px;height:9px"></div>
<div class="tl" style="left:743px;top:648px;width:20px;text-align:center;line-height:13px">66</div>
<div class="tick" style="left:763px;top:636px;width:1px;height:9px"></div>
<div class="tick" style="left:773px;top:636px;width:1px;height:9px"></div>
<div class="tl" style="left:763px;top:648px;width:20px;text-align:center;line-height:13px">68</div>
<div class="tick" style="left:783px;top:636px;width:1px;height:9px"></div>
<div class="tick" style="left:793px;top:636px;width:1px;height:9px"></div>
<div class="tl" style="left:783px;top:648px;width:20px;text-align:center;line-height:13px">70</div>
<div class="tick" style="left:803px;top:636px;width:1px;height:9px"></div>
<div class="tick" style="left:812px;top:636px;width:1px;height:9px"></div>
<div class="tl" style="left:802px;top:648px;width:20px;text-align:center;line-height:13px">72</div>
<div class="tick" style="left:822px;top:636px;width:1px;height:9px"></div>
<div class="tick" style="left:832px;top:636px;width:1px;height:9px"></div>
<div class="tl" style="left:822px;top:648px;width:20px;text-align:center;line-height:13px">74</div>
<div class="tick" style="left:842px;top:636px;width:1px;height:9px"></div>
<div class="tick" style="left:852px;top:636px;width:1px;height:9px"></div>
<div class="tl" style="left:842px;top:648px;width:20px;text-align:center;line-height:13px">76</div>
<div class="tick" style="left:862px;top:636px;width:1px;height:9px"></div>
<div class="tick" style="left:872px;top:636px;width:1px;height:9px"></div>
<div class="tl" style="left:862px;top:648px;width:20px;text-align:center;line-height:13px">78</div>
<div class="tick" style="left:881px;top:636px;width:1px;height:9px"></div>
<div class="tick" style="left:891px;top:636px;width:1px;height:9px"></div>
<div class="tl" style="left:881px;top:648px;width:20px;text-align:center;line-height:13px">80</div>
<div class="tick" style="left:901px;top:636px;width:1px;height:9px"></div>
<div class="sbv" style="left:903px;top:629px;height:36px;width:12px;background:linear-gradient(to bottom,#c4c4c4,#e8e8e8)"></div><div class="btn" style="left:903px;top:629px;width:12px;height:10px"></div><div class="tri" style="left:906px;top:633px;border-width:0 3px 4px 3px;border-color:transparent transparent #fff transparent"></div><div class="tri" style="left:906px;top:632px;border-width:0 3px 4px 3px;border-color:transparent transparent #3e3e3e transparent"></div><div class="btn" style="left:903px;top:656px;width:12px;height:9px"></div><div class="tri" style="left:906px;top:660px;border-width:4px 3px 0 3px;border-color:#fff transparent transparent transparent"></div><div class="tri" style="left:906px;top:659px;border-width:4px 3px 0 3px;border-color:#3e3e3e transparent transparent transparent"></div>
</div>
<div class="panel" style="left:95px;top:670px;width:820px;height:36px"></div>
<div class="a" style="left:101px;top:676px;width:796px;height:10px;overflow:hidden;background-image:linear-gradient(to right,#454040 0,#454040 1px,transparent 1px,transparent 9px,#454040 9px,#454040 10px),linear-gradient(to bottom,#454040 0,#454040 1px,transparent 1px,transparent 9px,#454040 9px,#454040 10px);background-size:10px 10px"><i class="c" style="left:1px;top:1px;background:#0a2fae"></i><i class="c" style="left:11px;top:1px;background:#0a2fae"></i><i class="c" style="left:21px;top:1px;background:#0a2fae"></i><i class="c" style="left:31px;top:1px;background:#0a2fae"></i><i class="c" style="left:41px;top:1px;background:#0a2fae"></i><i class="c" style="left:51px;top:1px;background:#b6005e"></i><i class="c" style="left:61px;top:1px;background:#b6005e"></i><i class="c" style="left:71px;top:1px;background:#b6005e"></i><i class="c" style="left:81px;top:1px;background:#b6005e"></i><i class="c" style="left:91px;top:1px;background:#b6005e"></i></div>
<div class="sbv" style="left:901px;top:671px;height:34px;width:13px;background:linear-gradient(to bottom,#c4c4c4,#e8e8e8)"></div><div class="btn" style="left:901px;top:671px;width:13px;height:10px"></div><div class="tri" style="left:904px;top:675px;border-width:0 3px 4px 3px;border-color:transparent transparent #fff transparent"></div><div class="tri" style="left:904px;top:674px;border-width:0 3px 4px 3px;border-color:transparent transparent #3e3e3e transparent"></div><div class="btn" style="left:901px;top:696px;width:13px;height:9px"></div><div class="tri" style="left:904px;top:700px;border-width:4px 3px 0 3px;border-color:#fff transparent transparent transparent"></div><div class="tri" style="left:904px;top:699px;border-width:4px 3px 0 3px;border-color:#3e3e3e transparent transparent transparent"></div>
<div class="panel" style="left:920px;top:128px;width:421px;height:168px"></div>
<div class="a" style="left:926px;top:146.500px;font-size:12.300px;color:#111;line-height:15px">Palette</div>
<div class="a" style="left:926px;top:178px;font-size:12.300px;color:#111;line-height:15px">Warp</div>
<div class="a" style="left:926px;top:236px;font-size:12.300px;color:#111;line-height:15px">Weft</div>
<div class="a" style="left:969px;top:143px;width:82px;height:21px;border-radius:4px;border:1px solid #a5a5a5;background:linear-gradient(to bottom,#fafafa,#e4e4e4 50%,#c9c9c9);box-shadow:0 1px 0 #e8eef4"></div>
<div class="a" style="left:1033px;top:144px;width:1px;height:19px;background:#a8a8a8"></div>
<div class="a" style="left:976px;top:147px;font-size:12px;color:#222;line-height:15px">new test</div>
<div class="tri" style="left:1038px;top:152px;border-width:4.500px 4px 0 4px;border-color:#3a3a3a transparent transparent transparent"></div>
<div class="a" style="left:1056px;top:134px;width:54px;height:39px;border:1px solid #6f6f6f;background:linear-gradient(to bottom,#e6eef8,#d5e2f0 50%,#c3d4e8)"></div>
<div class="a" style="left:1115px;top:134px;width:54px;height:39px;border:1px solid #6f6f6f;background:linear-gradient(to bottom,#e6eef8,#d5e2f0 50%,#c3d4e8)"></div>
<div class="a" style="left:1174px;top:134px;width:54px;height:39px;border:1px solid #6f6f6f;background:linear-gradient(to bottom,#e6eef8,#d5e2f0 50%,#c3d4e8)"></div>
<svg class="a" style="left:1056px;top:134px" width="172" height="39" viewBox="1056 134 172 39"><circle cx="1083" cy="152.800" r="12.800" fill="#0560c9"/><path d="M1077.700 147.900L1083.200 154.800H1079.500C1079.500 157.800 1080 159.800 1081.600 161.800C1078.500 161.200 1075.200 158.800 1075.200 154.800H1072Z" fill="#fff"/><path d="M1088.800 157.900L1083.400 151.500H1086.900C1086.900 148.500 1086.400 146.400 1084.900 144.200C1088.200 144.400 1091.600 147 1091.600 151.500H1094.200Z" fill="#fff"/><g fill="none"><path d="M1131 139V165.500" stroke="#4ba3fa" stroke-width="2"/><path d="M1152.500 139V165.500" stroke="#000" stroke-width="1.200"/><path d="M1134.600 152.300H1149M1144.800 148L1149.300 152.300L1144.800 156.600" stroke="#1e90ff" stroke-width="2"/><path d="M1190 139V165.500" stroke="#4ba3fa" stroke-width="2"/><path d="M1211.500 139V165.500" stroke="#000" stroke-width="1.200"/><path d="M1209 152.300H1194.600M1198.800 148L1194.300 152.300L1198.800 156.600" stroke="#1e90ff" stroke-width="2"/></g></svg>
<div class="sw" style="left:969px;top:178px;background:#0a2fae"><b>A</b></div>
<div class="sw" style="left:969px;top:237px;background:#e9e74e"><b>a</b></div>
<div class="sw" style="left:996px;top:178px;background:#000000"><b></b></div>
<div class="sw" style="left:996px;top:237px;background:#ffffff"><b>b</b></div>
<div class="sw" style="left:1023px;top:178px;background:#b30030"><b>C*</b></div>
<div class="sw" style="left:1023px;top:237px;background:#b30030"><b>c*</b></div>
<div class="sw" style="left:1050px;top:178px;background:#b3005c"><b>D*</b></div>
<div class="sw" style="left:1050px;top:237px;background:#b3005c"><b>d</b></div>
<div class="sw" style="left:1077px;top:178px;background:#b3007c"><b>E</b></div>
<div class="sw" style="left:1077px;top:237px;background:#b3007c"><b>e*</b></div>
<div class="sw" style="left:1104px;top:178px;background:#b300b0"><b>F</b></div>
<div class="sw" style="left:1104px;top:237px;background:#b300b0"><b>f*</b></div>
<div class="sw" style="left:1131px;top:178px;background:#8a00b0"><b>G</b></div>
<div class="sw" style="left:1131px;top:237px;background:#8a00b0"><b>g</b></div>
<div class="sw" style="left:1158px;top:178px;background:#5a00b0"><b>H</b></div>
<div class="sw" style="left:1158px;top:237px;background:#5a00b0"><b>h</b></div>
<div class="sw" style="left:1185px;top:178px;background:#2d0aae"><b>I</b></div>
<div class="sw" style="left:1185px;top:237px;background:#2d0aae"><b>i</b></div>
<div class="sw" style="left:1212px;top:178px;background:#0a0ab0"><b>J</b></div>
<div class="sw" style="left:1212px;top:237px;background:#0a0ab0"><b>j</b></div>
<div class="sw" style="left:1239px;top:178px;background:#0a2fae"><b>K</b></div>
<div class="sw" style="left:1239px;top:237px;background:#0a2fae"><b>k</b></div>
<div class="sw" style="left:1266px;top:178px;background:#0a5eb8"><b>L</b></div>
<div class="sw" style="left:1266px;top:237px;background:#0a5eb8"><b>l</b></div>
<div class="sw" style="left:1293px;top:178px;background:#0a8ab0"><b>M</b></div>
<div class="sw" style="left:1293px;top:237px;background:#0a8ab0"><b>m*</b></div>
<div class="sw" style="left:969px;top:205px;background:#0ab0ae"><b>N</b></div>
<div class="sw" style="left:969px;top:264px;background:#0ab0ae"><b>n</b></div>
<div class="sw" style="left:996px;top:205px;background:#0ab088"><b>O</b></div>
<div class="sw" style="left:996px;top:264px;background:#0ab088"><b>o</b></div>
<div class="sw" style="left:1023px;top:205px;background:#0ab060"><b>P</b></div>
<div class="sw" style="left:1023px;top:264px;background:#0ab060"><b>p</b></div>
<div class="sw" style="left:1050px;top:205px;background:#0ab036"><b>Q</b></div>
<div class="sw" style="left:1050px;top:264px;background:#0ab036"><b>q</b></div>
<div class="sw" style="left:1077px;top:205px;background:#0ab00a"><b>R</b></div>
<div class="sw" style="left:1077px;top:264px;background:#0ab00a"><b>r</b></div>
<div class="sw" style="left:1104px;top:205px;background:#36b00a"><b>S</b></div>
<div class="sw" style="left:1104px;top:264px;background:#36b00a"><b>s</b></div>
<div class="sw" style="left:1131px;top:205px;background:#60b00a"><b>T</b></div>
<div class="sw" style="left:1131px;top:264px;background:#60b00a"><b>t</b></div>
<div class="sw" style="left:1158px;top:205px;background:#88b00a"><b>U</b></div>
<div class="sw" style="left:1158px;top:264px;background:#88b00a"><b>u</b></div>
<div class="sw" style="left:1185px;top:205px;background:#b0b00a"><b>V</b></div>
<div class="sw" style="left:1185px;top:264px;background:#b0b00a"><b>v</b></div>
<div class="sw" style="left:1212px;top:205px;background:#b88a0a"><b>W</b></div>
<div class="sw" style="left:1212px;top:264px;background:#b88a0a"><b>w</b></div>
<div class="sw" style="left:1239px;top:205px;background:#b8600a"><b>X</b></div>
<div class="sw" style="left:1239px;top:264px;background:#b8600a"><b>x</b></div>
<div class="sw" style="left:1266px;top:205px;background:#b8360a"><b>Y</b></div>
<div class="sw" style="left:1266px;top:264px;background:#b80a0a"><b>y</b></div>
<div class="sw" style="left:1293px;top:205px;background:#ffffff"><b>Z</b></div>
<div class="sw" style="left:1293px;top:264px;background:#ffffff"><b>z</b></div>
<div class="a" style="left:969px;top:232px;width:349px;height:3px;background:#585858"></div><div class="a" style="left:969px;top:232px;width:349px;height:1px;background:repeating-linear-gradient(to right,#d8d8d8 0,#d8d8d8 1px,#8a8a8a 1px,#8a8a8a 2px)"></div>
<div class="panel" style="left:920px;top:301px;width:137px;height:323px"></div>
<div class="grid" style="left:926px;top:307px;width:113px;height:299px;background-position:0px 9px"><i class="c k" style="left:1px;top:290px"></i><i class="c w" style="left:11px;top:290px"></i><i class="c w" style="left:1px;top:280px"></i><i class="c k" style="left:11px;top:280px"></i><i class="c k" style="left:1px;top:270px"></i><i class="c w" style="left:11px;top:270px"></i><i class="c w" style="left:1px;top:260px"></i><i class="c k" style="left:11px;top:260px"></i><i class="c k" style="left:1px;top:250px"></i><i class="c w" style="left:11px;top:250px"></i><i class="c w" style="left:1px;top:240px"></i><i class="c k" style="left:11px;top:240px"></i><i class="c k" style="left:1px;top:230px"></i><i class="c w" style="left:11px;top:230px"></i><i class="c w" style="left:1px;top:220px"></i><i class="c k" style="left:11px;top:220px"></i><i class="c k" style="left:1px;top:210px"></i><i class="c w" style="left:11px;top:210px"></i><i class="c w" style="left:1px;top:200px"></i><i class="c k" style="left:11px;top:200px"></i></div>
<div class="sbv" style="left:1043px;top:302px;height:308px;width:13px"><div class="trv" style="top:9px;bottom:8px"></div><div class="thv" style="top:280px;height:18px;width:11px"></div></div><div class="btn" style="left:1043px;top:302px;width:13px;height:10px"></div><div class="tri" style="left:1046px;top:306px;border-width:0 3px 4px 3px;border-color:transparent transparent #fff transparent"></div><div class="tri" style="left:1046px;top:305px;border-width:0 3px 4px 3px;border-color:transparent transparent #3e3e3e transparent"></div><div class="btn" style="left:1043px;top:601px;width:13px;height:9px"></div><div class="tri" style="left:1046px;top:605px;border-width:4px 3px 0 3px;border-color:#fff transparent transparent transparent"></div><div class="tri" style="left:1046px;top:604px;border-width:4px 3px 0 3px;border-color:#3e3e3e transparent transparent transparent"></div>
<div class="sbh" style="left:921px;top:610px;width:122px;height:13px"><div class="trh" style="left:9px;right:8px"></div><div class="thh" style="left:9px;width:18px;height:11px"></div></div><div class="btn" style="left:921px;top:610px;width:10px;height:13px"></div><div class="tri"  style="left:924px;top:614px;border-width:3px 4px 3px 0;border-color:transparent #fff transparent transparent"></div><div class="tri" style="left:924px;top:613px;border-width:3px 4px 3px 0;border-color:transparent #3e3e3e transparent transparent"></div><div class="btn" style="left:1034px;top:610px;width:9px;height:13px;border-right:none"></div><div class="tri"  style="left:1037px;top:614px;border-width:3px 0 3px 4px;border-color:transparent transparent transparent #fff"></div><div class="tri" style="left:1037px;top:613px;border-width:3px 0 3px 4px;border-color:transparent transparent transparent #3e3e3e"></div>
<div class="corner" style="left:1043px;top:610px;width:13px;height:13px"></div>
<div class="panel" style="left:1062px;top:301px;width:137px;height:323px"></div>
<div class="grid" style="left:1068px;top:307px;width:113px;height:299px;background-position:0px 9px"><i class="c k" style="left:1px;top:290px"></i><i class="c w" style="left:11px;top:290px"></i><i class="c w" style="left:1px;top:280px"></i><i class="c k" style="left:11px;top:280px"></i></div>
<div class="sbv" style="left:1185px;top:302px;height:308px;width:13px"><div class="trv" style="top:9px;bottom:8px"></div><div class="thv" style="top:280px;height:18px;width:11px"></div></div><div class="btn" style="left:1185px;top:302px;width:13px;height:10px"></div><div class="tri" style="left:1188px;top:306px;border-width:0 3px 4px 3px;border-color:transparent transparent #fff transparent"></div><div class="tri" style="left:1188px;top:305px;border-width:0 3px 4px 3px;border-color:transparent transparent #3e3e3e transparent"></div><div class="btn" style="left:1185px;top:601px;width:13px;height:9px"></div><div class="tri" style="left:1188px;top:605px;border-width:4px 3px 0 3px;border-color:#fff transparent transparent transparent"></div><div class="tri" style="left:1188px;top:604px;border-width:4px 3px 0 3px;border-color:#3e3e3e transparent transparent transparent"></div>
<div class="sbh" style="left:1063px;top:610px;width:122px;height:13px"><div class="trh" style="left:9px;right:8px"></div><div class="thh" style="left:9px;width:18px;height:11px"></div></div><div class="btn" style="left:1063px;top:610px;width:10px;height:13px"></div><div class="tri"  style="left:1066px;top:614px;border-width:3px 4px 3px 0;border-color:transparent #fff transparent transparent"></div><div class="tri" style="left:1066px;top:613px;border-width:3px 4px 3px 0;border-color:transparent #3e3e3e transparent transparent"></div><div class="btn" style="left:1176px;top:610px;width:9px;height:13px;border-right:none"></div><div class="tri"  style="left:1179px;top:614px;border-width:3px 0 3px 4px;border-color:transparent transparent transparent #fff"></div><div class="tri" style="left:1179px;top:613px;border-width:3px 0 3px 4px;border-color:transparent transparent transparent #3e3e3e"></div>
<div class="corner" style="left:1185px;top:610px;width:13px;height:13px"></div>
<div class="panel" style="left:1204px;top:301px;width:137px;height:323px"></div>
<div class="grid" style="left:1210px;top:307px;width:113px;height:299px;background-position:0px 9px"><i class="c k" style="left:1px;top:290px"></i><i class="c w" style="left:11px;top:290px"></i><i class="c w" style="left:1px;top:280px"></i><i class="c k" style="left:11px;top:280px"></i><i class="c k" style="left:1px;top:270px"></i><i class="c w" style="left:11px;top:270px"></i><i class="c w" style="left:1px;top:260px"></i><i class="c k" style="left:11px;top:260px"></i><i class="c k" style="left:1px;top:250px"></i><i class="c w" style="left:11px;top:250px"></i><i class="c w" style="left:1px;top:240px"></i><i class="c k" style="left:11px;top:240px"></i><i class="c k" style="left:1px;top:230px"></i><i class="c w" style="left:11px;top:230px"></i><i class="c w" style="left:1px;top:220px"></i><i class="c k" style="left:11px;top:220px"></i><i class="c k" style="left:1px;top:210px"></i><i class="c w" style="left:11px;top:210px"></i><i class="c w" style="left:1px;top:200px"></i><i class="c k" style="left:11px;top:200px"></i></div>
<div class="sbv" style="left:1327px;top:302px;height:308px;width:13px"><div class="trv" style="top:9px;bottom:8px"></div><div class="thv" style="top:280px;height:18px;width:11px"></div></div><div class="btn" style="left:1327px;top:302px;width:13px;height:10px"></div><div class="tri" style="left:1330px;top:306px;border-width:0 3px 4px 3px;border-color:transparent transparent #fff transparent"></div><div class="tri" style="left:1330px;top:305px;border-width:0 3px 4px 3px;border-color:transparent transparent #3e3e3e transparent"></div><div class="btn" style="left:1327px;top:601px;width:13px;height:9px"></div><div class="tri" style="left:1330px;top:605px;border-width:4px 3px 0 3px;border-color:#fff transparent transparent transparent"></div><div class="tri" style="left:1330px;top:604px;border-width:4px 3px 0 3px;border-color:#3e3e3e transparent transparent transparent"></div>
<div class="sbh" style="left:1205px;top:610px;width:122px;height:13px"><div class="trh" style="left:9px;right:8px"></div><div class="thh" style="left:9px;width:18px;height:11px"></div></div><div class="btn" style="left:1205px;top:610px;width:10px;height:13px"></div><div class="tri"  style="left:1208px;top:614px;border-width:3px 4px 3px 0;border-color:transparent #fff transparent transparent"></div><div class="tri" style="left:1208px;top:613px;border-width:3px 4px 3px 0;border-color:transparent #3e3e3e transparent transparent"></div><div class="btn" style="left:1318px;top:610px;width:9px;height:13px;border-right:none"></div><div class="tri"  style="left:1321px;top:614px;border-width:3px 0 3px 4px;border-color:transparent transparent transparent #fff"></div><div class="tri" style="left:1321px;top:613px;border-width:3px 0 3px 4px;border-color:transparent transparent transparent #3e3e3e"></div>
<div class="corner" style="left:1327px;top:610px;width:13px;height:13px"></div>
<div class="lpanel" style="left:920px;top:629px;width:137px;height:77px;overflow:hidden"></div>
<div class="a" style="left:947px;top:636px;width:108px;height:22px;overflow:hidden"><div class="bl" style="left:0.300px;top:1.800px;font-size:14px;line-height:17px;letter-spacing:0.560px;transform:scaleX(1.07);transform-origin:0 0;-webkit-text-stroke:0.350px #000">Peg Plan</div></div>
<div class="lpanel" style="left:1062px;top:629px;width:137px;height:77px;overflow:hidden"></div>
<div class="a" style="left:1089px;top:636px;width:108px;height:22px;overflow:hidden"><div class="bl" style="left:0.300px;top:1.800px;font-size:14px;line-height:17px;letter-spacing:0.560px;transform:scaleX(1.07);transform-origin:0 0;-webkit-text-stroke:0.350px #000">Tie Up Plan</div></div>
<div class="lpanel" style="left:1204px;top:629px;width:137px;height:77px;overflow:hidden"></div>
<div class="a" style="left:1231px;top:636px;width:108px;height:22px;overflow:hidden"><div class="bl" style="left:0.300px;top:1.800px;font-size:14px;line-height:17px;letter-spacing:0.560px;transform:scaleX(1.07);transform-origin:0 0;-webkit-text-stroke:0.350px #000">Treadling Ord</div></div>
<div class="a" style="left:0;top:725px;width:1359px;height:2px;background:#7d90a8"></div>
<div class="a" style="left:0;top:727px;width:1359px;height:39px;background:#fff"></div>
<div class="bl" style="left:18.300px;top:728.200px;font-size:14px;line-height:18px;letter-spacing:0.590px;transform:scaleX(1.07);transform-origin:0 0;-webkit-text-stroke:0.300px #000" id="status">You have clicked Front Side view menu to view in font side representation, please wait</div>
<svg class="a" style="left:108px;top:90px" width="280" height="50" viewBox="108 90 280 50"><defs><linearGradient id="ttg" x1="0" y1="0" x2="0" y2="1"><stop offset="0" stop-color="#fdf39a"/><stop offset="0.5" stop-color="#f3e874"/><stop offset="1" stop-color="#e6d84c"/></linearGradient><filter id="tts" x="-5%" y="-20%" width="110%" height="150%"><feGaussianBlur stdDeviation="1.2"/></filter></defs><path d="M114 97H381V127L372 135.500H114Z" fill="#000" opacity="0.35" filter="url(#tts)"/><path d="M112.500 94.500H379.500V125L370.500 133.500H112.500Z" fill="url(#ttg)" stroke="#cbbd38" stroke-width="1"/><path d="M113.500 132.500V95.500H378.500" fill="none" stroke="#fffbe0" stroke-width="1"/><path d="M377.500 96V125" fill="none" stroke="#fbf3b0" stroke-width="1"/><path d="M370.500 133L371 126L379 125Z" fill="#f0e582" stroke="#cbbd38" stroke-width="0.600"/></svg>
<div class="bl" style="left:120px;top:99px;font-size:12px;line-height:16px;letter-spacing:0.12px;transform:scaleX(0.97);transform-origin:0 0" id="tt1">Front Visulization (Ctrl+F4)</div>
<div class="bl" style="left:120px;top:115px;font-size:12px;line-height:16px;letter-spacing:0.065px;transform:scaleX(0.97);transform-origin:0 0" id="tt2">Click to see Front Side Visulization view item</div>
<div class="a" style="left:1359px;top:0;width:7px;height:768px;overflow:hidden"><div class="a" style="left:0;top:0;width:7px;height:46px;background:linear-gradient(to right,#d9d9d9,#ebebeb 3px,#eeeeee)"></div><div class="a" style="left:-10px;top:27px;width:13px;height:13px;border-radius:6.500px;background:#0f6fca"></div><div class="a" style="left:0;top:46px;width:7px;height:18px;background:linear-gradient(to right,#d2d2d2,#e2e2e2 3px,#e6e6e6);border-top:1px solid #f4f4f4"></div><svg class="a" style="left:0;top:53px" width="4" height="6" viewBox="0 0 4 6"><path d="M0 0.500L2.500 4.500" stroke="#222" stroke-width="1.300" fill="none"/></svg><div class="a" style="left:0;top:64px;width:6px;height:495px;background:linear-gradient(to right,#a6a6a6,#b4b4b4 2px,#bcbcbc)"></div><div class="a" style="left:6px;top:64px;width:1px;height:495px;background:#d6d6d6"></div><div class="a" style="left:0;top:559px;width:7px;height:138px;background:linear-gradient(to right,#cfcfcf,#dcdcdc 3px,#dedede)"></div><svg class="a" style="left:0;top:667px" width="4" height="6" viewBox="0 0 4 6"><path d="M0 5L2.500 1" stroke="#222" stroke-width="1.300" fill="none"/></svg><div class="a" style="left:0;top:697px;width:7px;height:30px;background:linear-gradient(to right,#d6d6d6,#e6e6e6 3px,#e8e8e8);border-top:1px solid #c4c4c4"></div><div class="a" style="left:-9px;top:707px;width:12px;height:15px;border-radius:6px;border:1px solid #777"></div><div class="a" style="left:0;top:727px;width:7px;height:41px;background:#0e0e10"></div><div class="a" style="left:3px;top:727px;width:1px;height:41px;background:#5c5c5c"></div></div>
<div class="a" style="left:1358px;top:0;width:1px;height:766px;background:#1883d7"></div>
<div class="a" style="left:0;top:765px;width:1359px;height:1px;background:#1883d7"></div>
<div class="a" style="left:0;top:766px;width:1359px;height:2px;background:linear-gradient(to right,#0c0c10 0,#0c0c10 48px,#c2c0be 48px,#c2c0be 392px,#0c0c10 392px,#0c0c10 594px,#4a8fd2 594px,#4a8fd2 634px,#0c0c10 634px,#0c0c10 639px,#4a8fd2 639px,#4a8fd2 687px,#0c0c10 687px,#0c0c10 692px,#4a8fd2 692px,#4a8fd2 731px,#0c0c10 731px)"></div>
</div></body></html>
